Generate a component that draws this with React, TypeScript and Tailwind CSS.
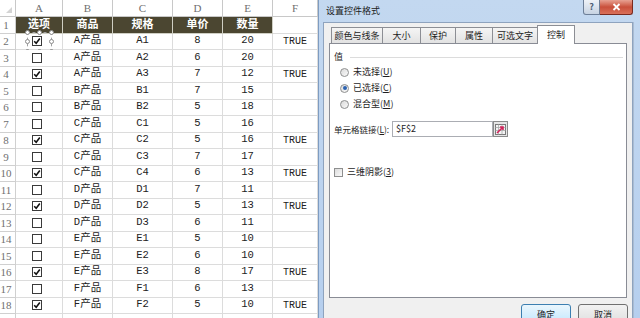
import React from 'react';

type Row = [string, string, string, string, boolean];

const data: Row[] = [
  ['A产品', 'A1', '8', '20', true],
  ['A产品', 'A2', '6', '20', false],
  ['A产品', 'A3', '7', '12', true],
  ['B产品', 'B1', '7', '15', false],
  ['B产品', 'B2', '5', '18', false],
  ['C产品', 'C1', '5', '16', false],
  ['C产品', 'C2', '5', '16', true],
  ['C产品', 'C3', '7', '17', false],
  ['C产品', 'C4', '6', '13', true],
  ['D产品', 'D1', '7', '11', false],
  ['D产品', 'D2', '5', '13', true],
  ['D产品', 'D3', '6', '11', false],
  ['E产品', 'E1', '5', '10', false],
  ['E产品', 'E2', '6', '10', false],
  ['E产品', 'E3', '8', '17', true],
  ['F产品', 'F1', '6', '13', false],
  ['F产品', 'F2', '5', '10', true],
];

const cell = 'flex items-center justify-center border-r border-b border-[#dcdcdc] bg-white';
const rowHead = 'flex items-center justify-center pr-[3px] border-r border-b border-[#d0d0d0] bg-white text-[#6f6f6f] font-["Liberation_Serif",serif] text-[11px]';
const darkHead = 'flex items-center justify-center border-r border-b border-[#cfcfc4] bg-[#4b4631] text-white font-bold text-[11px]';

const Handle = ({ className }: { className: string }) => (
  <span className={`absolute h-[5px] w-[5px] rounded-full border border-[#8c8c8c] bg-white ${className}`} />
);

const SheetBox = ({ checked }: { checked: boolean }) => (
  <span className="flex h-[10px] w-[10px] items-center justify-center border border-[#3a3a3a] bg-white">
    {checked && (
      <svg width="8" height="8" viewBox="0 0 8 8">
        <path d="M1.2 4.2 L3.2 6.2 L6.8 1.6" fill="none" stroke="#111" strokeWidth="1.6" />
      </svg>
    )}
  </span>
);

const Sheet = () => (
  <div className="grid w-[318px] shrink-0 grid-cols-[16px_47px_50px_60px_50px_50px_45px] grid-rows-[17px_repeat(19,16.5px)] font-['Liberation_Mono','Noto_Sans_CJK_SC',monospace] text-[10.5px] text-[#222]">
    <div className="flex items-end justify-end border-r border-b border-[#c8c8c8] bg-white pb-[3px] pr-[3px]">
      <svg width="6" height="6" viewBox="0 0 6 6">
        <path d="M6 0 L6 6 L0 6 Z" fill="#d4d4d4" />
      </svg>
    </div>
    {['A', 'B', 'C', 'D', 'E', 'F'].map((c) => (
      <div key={c} className="flex items-center justify-center border-r border-b border-[#c8c8c8] bg-white font-['Liberation_Serif',serif] text-[11px] text-[#6f6f6f]">
        {c}
      </div>
    ))}

    <div className={rowHead}>1</div>
    <div className={darkHead}>选项</div>
    <div className={darkHead}>商品</div>
    <div className={darkHead}>规格</div>
    <div className={darkHead}>单价</div>
    <div className={darkHead}>数量</div>
    <div className={cell} />

    {data.map(([name, spec, price, qty, on], i) => (
      <React.Fragment key={spec}>
        <div className={rowHead}>{i + 2}</div>
        <div className={`${cell} relative !justify-start pl-[16px]`}>
          <SheetBox checked={on} />
          {i === 0 && (
            <span className="absolute left-[11px] top-[-2px] h-[20px] w-[25px] border border-dashed border-[#a0a0a0]">
              <Handle className="left-[-3px] top-[-3px]" />
              <Handle className="left-[9px] top-[-3px]" />
              <Handle className="right-[-3px] top-[-3px]" />
              <Handle className="left-[-3px] top-[6px]" />
              <Handle className="right-[-3px] top-[6px]" />
              <Handle className="bottom-[-3px] left-[-3px]" />
              <Handle className="bottom-[-3px] left-[9px]" />
              <Handle className="bottom-[-3px] right-[-3px]" />
            </span>
          )}
        </div>
        <div className={cell}>{name}</div>
        <div className={cell}>{spec}</div>
        <div className={cell}>{price}</div>
        <div className={cell}>{qty}</div>
        <div className={`${cell} text-[10px]`}>{on ? 'TRUE' : ''}</div>
      </React.Fragment>
    ))}

    <div className={rowHead}>19</div>
    {[0, 1, 2, 3, 4, 5].map((k) => (
      <div key={k} className={cell} />
    ))}
  </div>
);

const Radio = ({ on, label, hot }: { on?: boolean; label: string; hot: string }) => (
  <div className="flex h-[16px] shrink-0 items-center pl-[6px]">
    <span className="flex h-[9px] w-[9px] items-center justify-center rounded-full border border-[#8e8f8f] bg-gradient-to-br from-[#d9d9d9] to-[#fbfbfb]">
      {on && <span className="h-[4px] w-[4px] rounded-full bg-[#2c62b0]" />}
    </span>
    <span className="ml-[4px] text-[9px] text-[#1e1e1e]">
      {label}(<span className="underline">{hot}</span>)
    </span>
  </div>
);

const tabs = [
  { name: '颜色与线条', w: 'w-[51px]' },
  { name: '大小', w: 'w-[38px]' },
  { name: '保护', w: 'w-[35px]' },
  { name: '属性', w: 'w-[37px]' },
  { name: '可选文字', w: 'w-[45px]' },
];

const Dialog = () => (
  <div className="flex w-[322px] shrink-0 flex-col border-l border-[#7e9cc2] bg-gradient-to-b from-[#c3d8f0] to-[#b6cfee] font-['Noto_Sans_CJK_SC',sans-serif]">
    {/* title bar */}
    <div className="flex h-[22px] shrink-0 items-start">
      <span className="pl-[7px] pt-[5px] text-[9px] leading-[12px] text-[#1a1a1a]">设置控件格式</span>
      <div className="flex-1" />
      <div className="flex h-[15px] w-[17px] items-center justify-center rounded-bl-[3px] border border-t-0 border-[#6d7f98] bg-gradient-to-b from-[#eef2f7] to-[#c7d3e2] text-[9px] font-bold text-[#4d5d74]">
        ?
      </div>
      <div className="flex h-[15px] w-[33px] items-center justify-center rounded-br-[3px] border border-t-0 border-l-0 border-[#7a2a20] bg-gradient-to-b from-[#e7a192] via-[#c94f3b] to-[#d9705a]">
        <svg width="9" height="8" viewBox="0 0 9 8">
          <path d="M1.5 1 L7.5 7 M7.5 1 L1.5 7" stroke="#fff" strokeWidth="1.8" />
        </svg>
      </div>
      <div className="w-[7px]" />
    </div>

    <div className="flex min-h-0 flex-1">
      <div className="w-[4px] shrink-0" />
      {/* client */}
      <div className="flex w-[310px] shrink-0 flex-col overflow-hidden border border-b-0 border-[#8ea3be] bg-[#f0f0f0] pt-[2px]">
        <div className="flex h-[18px] shrink-0 items-end pl-[7px]">
          {tabs.map((t) => (
            <div
              key={t.name}
              className={`flex h-[16px] ${t.w} items-center justify-center border border-r-0 border-b-0 border-[#8c8e94] bg-gradient-to-b from-[#f5f5f5] to-[#e2e2e2] text-[9px] text-[#1e1e1e]`}
            >
              {t.name}
            </div>
          ))}
          <div className="relative z-10 -mb-px flex h-[19px] w-[38px] items-center justify-center border border-b-0 border-[#8c8e94] bg-white text-[9px] text-[#1e1e1e]">
            控制
          </div>
        </div>

        <div className="ml-[5px] flex h-[255px] w-[298px] shrink-0 flex-col border border-[#898c95] bg-white pl-[4px] pt-[6px] text-[9px] text-[#1e1e1e]">
          <div className="flex h-[14px] shrink-0 items-center">
            <span>值</span>
            <span className="ml-[7px] mr-[3px] h-px flex-1 bg-[#dcdcdc]" />
          </div>
          <Radio label="未选择" hot="U" />
          <Radio on label="已选择" hot="C" />
          <Radio label="混合型" hot="M" />

          <div className="mt-[9px] flex h-[16px] shrink-0 items-center">
            <span className="w-[58px] whitespace-nowrap text-[8.5px]">
              单元格链接(<span className="underline">L</span>):
            </span>
            <div className="flex h-[16px] w-[101px] items-center border border-[#abadb3] bg-white pl-[3px] text-[9px]">
              $F$2
            </div>
            <div className="flex h-[16px] w-[15px] items-center justify-center border border-[#8b8b8b] bg-[#e6e6e6]">
              <svg width="11" height="11" viewBox="0 0 11 11">
                <rect x="0.5" y="0.5" width="10" height="10" fill="#f4f4f4" stroke="#7a7a7a" />
                <path d="M0.5 3.5 H10.5 M0.5 6.5 H10.5 M3.5 0.5 V10.5 M7 0.5 V10.5" stroke="#a8a8a8" strokeWidth="0.8" />
                <path d="M2 9 L8 3 M5 3 H8 V6" fill="none" stroke="#d0245a" strokeWidth="1.6" />
              </svg>
            </div>
          </div>

          <div className="mt-[28px] flex h-[14px] shrink-0 items-center">
            <span className="h-[9px] w-[9px] border border-[#8e8f8f] bg-gradient-to-br from-[#dcdcdc] to-[#fafafa]" />
            <span className="ml-[4px]">
              三维阴影(<span className="underline">3</span>)
            </span>
          </div>
        </div>

        <div className="flex shrink-0 justify-end gap-[7px] pr-[4px] pt-[6px] text-[9px] text-[#1e1e1e]">
          <div className="flex h-[22px] w-[50px] items-start justify-center rounded-[3px] border border-[#3c7fb1] bg-gradient-to-b from-[#eaf6fd] to-[#bee6fd] pt-[3px]">
            确定
          </div>
          <div className="flex h-[22px] w-[50px] items-start justify-center rounded-[3px] border border-[#707070] bg-gradient-to-b from-[#f2f2f2] to-[#dddddd] pt-[3px]">
            取消
          </div>
        </div>
      </div>
      <div className="w-[7px] shrink-0 border-l border-[#a9bcd3]" />
    </div>
  </div>
);

export default function App() {
  return (
    <div className="flex h-[318px] w-[640px] overflow-hidden bg-white">
      <Sheet />
      <Dialog />
    </div>
  );
}
